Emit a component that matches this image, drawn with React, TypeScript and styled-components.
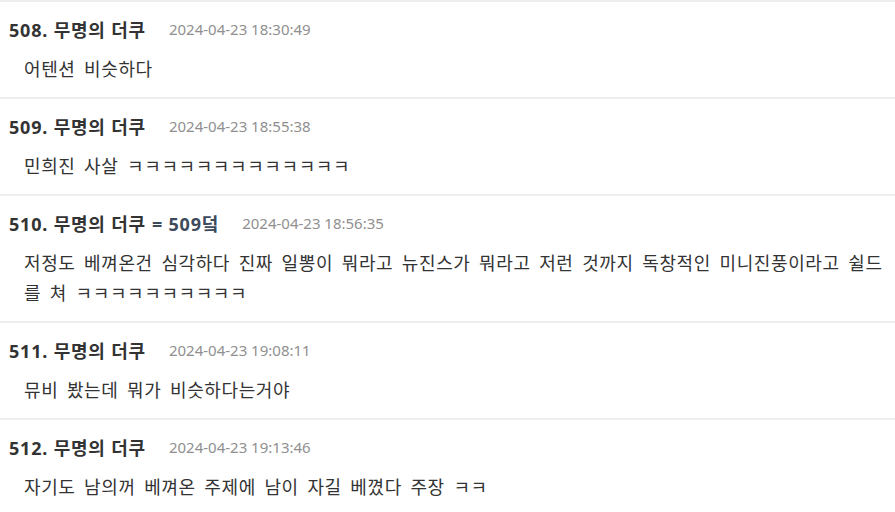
import React from "react";
import styled, { createGlobalStyle } from "styled-components";

const Global = createGlobalStyle`
  html, body { margin: 0; padding: 0; background: #ffffff; }
  body { font-family: "Noto Sans", "Noto Sans CJK KR", sans-serif; }
`;

const List = styled.div`
  width: 895px;
  display: flex;
  flex-direction: column;
`;

const Item = styled.div`
  border-top: 2px solid #eeeeee;
  padding: 14px 0 14px 0;
  display: flex;
  flex-direction: column;
  gap: 12px;
`;

const Header = styled.div`
  display: flex;
  align-items: center;
  gap: 23px;
  padding-left: 9px;
  height: 25px;
`;

const Name = styled.span`
  font-family: "Noto Sans", "Noto Sans CJK KR", sans-serif;
  font-weight: 700;
  font-size: 18px;
  letter-spacing: 0.8px;
  color: #333333;
  white-space: nowrap;
`;

const Reply = styled.span`
  color: #3d4a5b;
  margin-left: 6px;
`;

const DateText = styled.span`
  font-family: "Noto Sans", "Noto Sans CJK KR", sans-serif;
  font-size: 15px;
  color: #909090;
  white-space: nowrap;
`;

const Body = styled.div`
  font-family: "Noto Sans CJK KR", sans-serif;
  font-size: 18px;
  line-height: 30px;
  letter-spacing: 0.6px;
  word-spacing: 4px;
  color: #333333;
  padding: 0 8px 0 24px;
`;

type C = { no: number; reply?: string; date: string; text: string };

const comments: C[] = [
  { no: 508, date: "2024-04-23 18:30:49", text: "어텐션 비슷하다" },
  { no: 509, date: "2024-04-23 18:55:38", text: "민희진 사살 ㅋㅋㅋㅋㅋㅋㅋㅋㅋㅋㅋㅋㅋ" },
  {
    no: 510,
    reply: "= 509덬",
    date: "2024-04-23 18:56:35",
    text: "저정도 베껴온건 심각하다 진짜 일뽕이 뭐라고 뉴진스가 뭐라고 저런 것까지 독창적인 미니진풍이라고 쉴드를 쳐 ㅋㅋㅋㅋㅋㅋㅋㅋㅋㅋ",
  },
  { no: 511, date: "2024-04-23 19:08:11", text: "뮤비 봤는데 뭐가 비슷하다는거야" },
  { no: 512, date: "2024-04-23 19:13:46", text: "자기도 남의꺼 베껴온 주제에 남이 자길 베꼈다 주장 ㅋㅋ" },
];

export default function App() {
  return (
    <>
      <Global />
      <List>
        {comments.map((c) => (
          <Item key={c.no}>
            <Header>
              <Name>
                {c.no}. 무명의 더쿠
                {c.reply && <Reply>{c.reply}</Reply>}
              </Name>
              <DateText>{c.date}</DateText>
            </Header>
            <Body>{c.text}</Body>
          </Item>
        ))}
      </List>
    </>
  );
}
